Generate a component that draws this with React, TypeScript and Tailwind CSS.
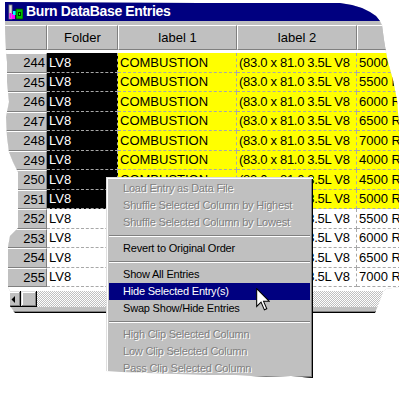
import React from "react";

const rows = [
  { n: 244, rpm: "5000", sel: true },
  { n: 245, rpm: "5500", sel: true },
  { n: 246, rpm: "6000", sel: true },
  { n: 247, rpm: "6500", sel: true },
  { n: 248, rpm: "7000", sel: true },
  { n: 249, rpm: "4000", sel: true },
  { n: 250, rpm: "4500", sel: true },
  { n: 251, rpm: "5000", sel: true },
  { n: 252, rpm: "5500", sel: false },
  { n: 253, rpm: "6000", sel: false },
  { n: 254, rpm: "6500", sel: false },
  { n: 255, rpm: "7000", sel: false },
];

type Item = { label?: string; off?: boolean; hot?: boolean; sep?: boolean };

const menu: Item[] = [
  { label: "Load Entry as Data File", off: true },
  { label: "Shuffle Selected Column by Highest", off: true },
  { label: "Shuffle Selected Column by Lowest", off: true },
  { sep: true },
  { label: "Revert to Original Order" },
  { sep: true },
  { label: "Show All Entries" },
  { label: "Hide Selected Entry(s)", hot: true },
  { label: "Swap Show/Hide Entries" },
  { sep: true },
  { label: "High Clip Selected Column", off: true },
  { label: "Low Clip Selected Column", off: true },
  { label: "Pass Clip Selected Column", off: true },
];

const raised =
  "bg-[#c0c0c0] shadow-[inset_-1px_-1px_0_#000,inset_1px_1px_0_#dfdfdf,inset_-2px_-2px_0_#808080,inset_2px_2px_0_#fff]";
const head =
  "h-[25px] shrink-0 flex items-center justify-center border border-t-white border-l-white border-r-[#808080] border-b-[#808080] bg-[#c0c0c0] text-[13px] text-black";
const cell =
  "h-full shrink-0 flex items-center overflow-hidden whitespace-nowrap border-b border-r border-dashed border-[#a8a8a8] pl-[2px] text-[13px]";

function AppIcon() {
  return (
    <svg width="15" height="16" viewBox="0 0 15 16">
      <rect x="1" y="1" width="3" height="14" fill="#e0e0e0" stroke="#808080" strokeWidth="0.8" />
      <rect x="1.5" y="9" width="2" height="5.5" fill="#ff00ff" />
      <rect x="4" y="10" width="3" height="5" fill="#ff00ff" />
      <rect x="5" y="7" width="3" height="4" fill="#00ffff" />
      <rect x="8" y="5" width="7" height="10" fill="#00c000" stroke="#004000" strokeWidth="0.8" />
      <rect x="10" y="8" width="3" height="4" fill="#003000" />
      <rect x="11" y="9" width="1" height="2" fill="#00ff00" />
    </svg>
  );
}

export default function App() {
  return (
    <div className="relative h-[395px] w-[399px] overflow-hidden bg-white font-['Liberation_Sans',Arial,sans-serif]">
      <div className="ml-[4px] mt-[2px] flex h-[311px] w-[395px] flex-col bg-[#c0c0c0] [clip-path:polygon(1px_0,196px_1px,336px_1px,348px_3px,358px_6px,366px_10px,372px_14px,376px_19px,378px_23px,380px_38px,382px_50px,384px_60px,389px_78px,393px_98px,395px_123px,395px_285px,382px_287px,379px_290px,376px_298px,373px_306px,371px_311px,11px_311px,6px_304px,6px_289px,4px_285px,4px_245px,6px_234px,14px_226px,14px_170px,9px_160px,5px_150px,3px_135px,2px_115px,5px_100px,3px_80px,3px_60px,2px_50px,1px_20px)]">
        {/* title bar */}
        <div className="flex h-[19px] shrink-0 items-center gap-[3px] bg-[#000080] pl-[4px]">
          <AppIcon />
          <span className="text-[14px] font-bold tracking-[-0.35px] text-white">Burn DataBase Entries</span>
        </div>
        <div className="h-[4px] shrink-0" />

        {/* column headers */}
        <div className="flex shrink-0">
          <div className={`${head} w-[43px]`} />
          <div className={`${head} w-[71px]`}>Folder</div>
          <div className={`${head} w-[119px]`}>label 1</div>
          <div className={`${head} w-[120px]`}>label 2</div>
          <div className={`${head} w-[80px]`} />
        </div>

        {/* grid */}
        <div className="flex flex-1 flex-col bg-white pt-[3px]">
          {rows.map((r) => (
            <div key={r.n} className="flex h-[19.5px] shrink-0">
              <div className="flex h-full w-[43px] shrink-0 items-center justify-end border border-t-white border-l-white border-r-[#808080] border-b-[#808080] bg-[#c0c0c0] pr-[1px] text-[13px] text-black">
                {r.n}
              </div>
              <div className={`${cell} w-[71px] ${r.sel ? "bg-black text-white border-[#808080]" : "bg-white text-black"}`}>LV8</div>
              <div className={`${cell} w-[119px] text-[13.5px] text-black ${r.sel ? "bg-[#ffff00]" : "bg-white"}`}>COMBUSTION</div>
              <div className={`${cell} w-[120px] tracking-[-0.3px] text-black ${r.sel ? "bg-[#ffff00]" : "bg-white"}`}>(83.0 x 81.0 3.5L V8</div>
              <div className={`${cell} w-[80px] text-black ${r.sel ? "bg-[#ffff00]" : "bg-white"}`}>{r.rpm} RPM</div>
            </div>
          ))}
          <div className="flex-1" />
          {/* horizontal scrollbar */}
          <div className="flex h-[16px] shrink-0 pl-[1px]">
            <div className={`${raised} flex h-[16px] w-[16px] shrink-0 items-center justify-center`}>
              <svg width="4" height="7" viewBox="0 0 4 7">
                <polygon points="4,0 4,7 0.5,3.5" fill="#000" />
              </svg>
            </div>
            <div className={`${raised} h-[16px] w-[16px] shrink-0`} />
            <div className="h-[16px] flex-1 bg-[repeating-conic-gradient(#c0c0c0_0%_25%,#ffffff_0%_50%)] bg-[length:2px_2px]" />
          </div>
        </div>
        <div className="h-[4px] shrink-0" />
        <div className="h-[2px] shrink-0 border-t border-[#808080] bg-black" />
      </div>

      {/* context menu */}
      <div className="absolute left-[106px] top-[177px] h-[201px] w-[207px] bg-[#c0c0c0] p-[3px] shadow-[inset_1px_1px_0_#dfdfdf,inset_2px_2px_0_#fff,inset_-1px_-1px_0_#000,inset_-2px_-2px_0_#808080] [clip-path:polygon(0_0,207px_0,207px_201px,185px_199px,160px_200px,130px_198px,100px_198px,70px_197px,40px_196px,15px_195px,0_194px)]">
        {menu.map((m, i) =>
          m.sep ? (
            <div key={i} className="flex h-[9px] items-center">
              <div className="h-[2px] w-full border-t border-[#808080] bg-white" />
            </div>
          ) : (
            <div
              key={i}
              className={`flex h-[17px] items-center whitespace-nowrap pl-[14px] text-[11px] tracking-[-0.2px] ${
                m.hot
                  ? "bg-[#000080] text-white"
                  : m.off
                  ? "text-[#808080] [text-shadow:1px_1px_0_#fff]"
                  : "text-black"
              }`}
            >
              {m.label}
            </div>
          )
        )}
      </div>

      {/* mouse pointer */}
      <svg className="absolute left-[256px] top-[288px]" width="14" height="23" viewBox="0 0 12 20">
        <polygon
          points="0.5,0.5 0.5,16 4.3,12.3 7.2,19 9.3,18.1 6.5,11.6 11.5,11.6"
          fill="#fff"
          stroke="#000"
          strokeWidth="0.9"
          strokeLinejoin="miter"
        />
      </svg>
    </div>
  );
}
